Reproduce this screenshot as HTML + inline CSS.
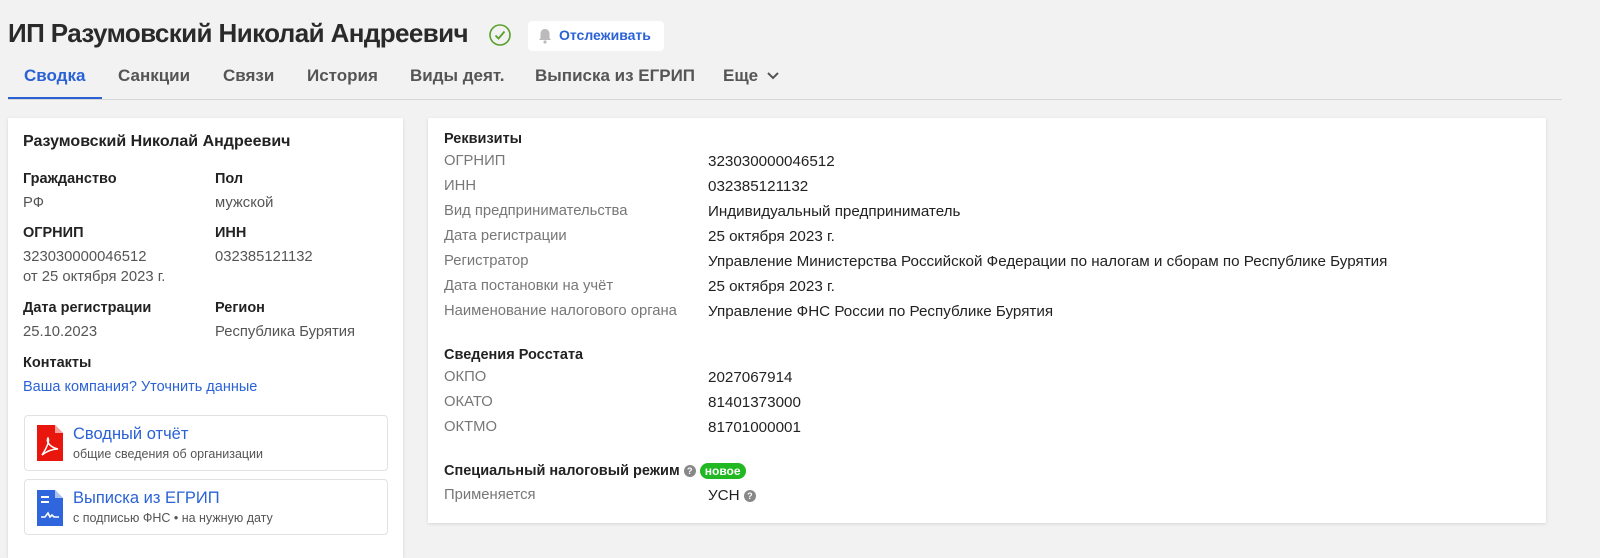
<!DOCTYPE html>
<html><head><meta charset="utf-8"><style>
*{margin:0;padding:0;box-sizing:border-box}
body{width:1600px;height:544px;overflow:hidden;background:#f2f2f2;font-family:"Liberation Sans",sans-serif;color:#222;position:relative}
.a{position:absolute;white-space:nowrap}
h1{position:absolute;left:8px;top:18px;font-size:26px;font-weight:bold;color:#2a2a2a;letter-spacing:-0.6px}
.tab{position:absolute;top:66px;font-size:17px;font-weight:bold;color:#555}
.card{position:absolute;background:#fff;box-shadow:0 1px 3px rgba(0,0,0,.12)}
.lb{font-size:14.5px;font-weight:bold;color:#222}
.v{font-size:14.8px;color:#555}
.k{font-size:14.8px;color:#777}
.d{font-size:15.2px;color:#222}
.box{position:absolute;left:16px;width:364px;height:56px;border:1px solid #e2e2e2;border-radius:4px}
.q{display:inline-block;width:12px;height:12px;border-radius:50%;background:#888;color:#fff;font-size:9px;text-align:center;line-height:12px;font-weight:bold;vertical-align:1px}
</style></head><body>
<h1>ИП Разумовский Николай Андреевич</h1>
<svg class="a" style="left:488px;top:23px" width="24" height="24" viewBox="0 0 24 24"><circle cx="12" cy="12" r="10" fill="none" stroke="#5aa02c" stroke-width="1.6"/><path d="M7.5 12.5l3 3 6-7" fill="none" stroke="#5aa02c" stroke-width="1.8"/></svg>
<div class="a" style="left:528px;top:21px;width:136px;height:30px;background:#fff;border-radius:4px"></div>
<svg class="a" style="left:538px;top:28px" width="14" height="16" viewBox="0 0 14 16"><path d="M7 1c-3 0-4.5 2.3-4.5 5v4L1 12h12l-1.5-2V6C11.5 3.3 10 1 7 1z" fill="#bbb"/><circle cx="7" cy="14" r="1.6" fill="#bbb"/></svg>
<div class="a" style="left:559px;top:27px;font-size:14px;font-weight:bold;color:#2a62d6">Отслеживать</div>
<div class="tab" style="left:24px;color:#2a62d6">Сводка</div>
<div class="a" style="left:8px;top:97px;width:94px;height:2px;background:#2a62d6"></div>
<div class="tab" style="left:118px">Санкции</div>
<div class="tab" style="left:223px">Связи</div>
<div class="tab" style="left:307px">История</div>
<div class="tab" style="left:410px">Виды деят.</div>
<div class="tab" style="left:535px">Выписка из ЕГРИП</div>
<div class="tab" style="left:723px">Еще</div>
<svg class="a" style="left:766px;top:71px" width="14" height="10" viewBox="0 0 14 10"><path d="M2 2l5 5 5-5" fill="none" stroke="#555" stroke-width="2"/></svg>
<div class="a" style="left:8px;top:99px;width:1554px;height:1px;background:#d6d6d6"></div>

<div class="card" style="left:8px;top:118px;width:395px;height:440px">
<div class="a" style="left:15px;top:15px;font-size:16px;font-weight:bold">Разумовский Николай Андреевич</div>
<div class="a lb" style="left:15px;top:53px">Гражданство</div><div class="a lb" style="left:207px;top:53px">Пол</div>
<div class="a v" style="left:15px;top:77px">РФ</div><div class="a v" style="left:207px;top:77px">мужской</div>
<div class="a lb" style="left:15px;top:107px">ОГРНИП</div><div class="a lb" style="left:207px;top:107px">ИНН</div>
<div class="a v" style="left:15px;top:131px">323030000046512</div><div class="a v" style="left:207px;top:131px">032385121132</div>
<div class="a v" style="left:15px;top:151px">от 25 октября 2023 г.</div>
<div class="a lb" style="left:15px;top:182px">Дата регистрации</div><div class="a lb" style="left:207px;top:182px">Регион</div>
<div class="a v" style="left:15px;top:206px">25.10.2023</div><div class="a v" style="left:207px;top:206px">Республика Бурятия</div>
<div class="a lb" style="left:15px;top:237px">Контакты</div>
<div class="a" style="left:15px;top:261px;font-size:14.5px;color:#2a62d6">Ваша компания? Уточнить данные</div>
<div class="box" style="top:297px"></div>
<svg class="a" style="left:29px;top:307px" width="26" height="36" viewBox="0 0 26 36"><path d="M0 0h18l8 8v28H0z" fill="#e8160c"/><path d="M18 0v8h8" fill="#fff" opacity=".6"/><path d="M5 30c4-6 8-14 6-17-2 3 1 9 10 11-5 0-11 2-16 6z" fill="none" stroke="#fff" stroke-width="1.5"/></svg>
<div class="a" style="left:65px;top:307px;font-size:16.5px;color:#2a62d6">Сводный отчёт</div>
<div class="a" style="left:65px;top:329px;font-size:12.5px;color:#555">общие сведения об организации</div>
<div class="box" style="top:361px"></div>
<svg class="a" style="left:29px;top:372px" width="26" height="36" viewBox="0 0 26 36"><path d="M0 0h18l8 8v28H0z" fill="#2f66dd"/><path d="M18 0v8h8" fill="#fff" opacity=".6"/><rect x="4" y="6" width="8" height="2" fill="#fff"/><rect x="4" y="11" width="8" height="2" fill="#fff"/><path d="M4 27h4l3-4 2 4 2-2 2 2h5" fill="none" stroke="#fff" stroke-width="1.6"/></svg>
<div class="a" style="left:65px;top:371px;font-size:16.5px;color:#2a62d6">Выписка из ЕГРИП</div>
<div class="a" style="left:65px;top:393px;font-size:12.5px;color:#555">с подписью ФНС • на нужную дату</div>
</div>

<div class="card" style="left:428px;top:118px;width:1118px;height:405px">
<div class="a lb" style="left:16px;top:13px">Реквизиты</div>
<div class="a k" style="left:16px;top:35px">ОГРНИП</div><div class="a d" style="left:280px;top:35px">323030000046512</div>
<div class="a k" style="left:16px;top:60px">ИНН</div><div class="a d" style="left:280px;top:60px">032385121132</div>
<div class="a k" style="left:16px;top:85px">Вид предпринимательства</div><div class="a d" style="left:280px;top:85px">Индивидуальный предприниматель</div>
<div class="a k" style="left:16px;top:110px">Дата регистрации</div><div class="a d" style="left:280px;top:110px">25 октября 2023 г.</div>
<div class="a k" style="left:16px;top:135px">Регистратор</div><div class="a d" style="left:280px;top:135px">Управление Министерства Российской Федерации по налогам и сборам по Республике Бурятия</div>
<div class="a k" style="left:16px;top:160px">Дата постановки на учёт</div><div class="a d" style="left:280px;top:160px">25 октября 2023 г.</div>
<div class="a k" style="left:16px;top:185px">Наименование налогового органа</div><div class="a d" style="left:280px;top:185px">Управление ФНС России по Республике Бурятия</div>
<div class="a lb" style="left:16px;top:229px">Сведения Росстата</div>
<div class="a k" style="left:16px;top:251px">ОКПО</div><div class="a d" style="left:280px;top:251px">2027067914</div>
<div class="a k" style="left:16px;top:276px">ОКАТО</div><div class="a d" style="left:280px;top:276px">81401373000</div>
<div class="a k" style="left:16px;top:301px">ОКТМО</div><div class="a d" style="left:280px;top:301px">81701000001</div>
<div class="a lb" style="left:16px;top:345px">Специальный налоговый режим <span class="q">?</span> <span style="display:inline-block;background:#22b822;color:#fff;font-size:12px;padding:0 5px;border-radius:8px;line-height:16px">новое</span></div>
<div class="a k" style="left:16px;top:369px">Применяется</div><div class="a d" style="left:280px;top:369px">УСН <span class="q">?</span></div>
</div>
</body></html>
